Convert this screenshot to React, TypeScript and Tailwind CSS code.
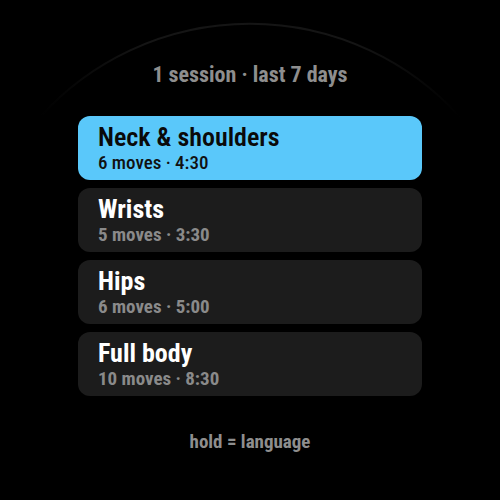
import React from "react";

const items = [
  { title: "Neck & shoulders", sub: "6 moves · 4:30", active: true },
  { title: "Wrists", sub: "5 moves · 3:30" },
  { title: "Hips", sub: "6 moves · 5:00" },
  { title: "Full body", sub: "10 moves · 8:30" },
];

export default function App() {
  return (
    <div
      className="relative w-[500px] h-[500px] bg-black overflow-hidden flex flex-col items-center"
      style={{ fontFamily: "Roboto, 'Liberation Sans', sans-serif" }}
    >
      <svg className="absolute left-0 top-0" width="500" height="500" viewBox="0 0 500 500">
        <defs>
          <linearGradient id="fade" x1="0" y1="0" x2="1" y2="0">
            <stop offset="0" stopColor="#151515" stopOpacity="0" />
            <stop offset="0.25" stopColor="#151515" stopOpacity="1" />
            <stop offset="0.75" stopColor="#151515" stopOpacity="1" />
            <stop offset="1" stopColor="#151515" stopOpacity="0" />
          </linearGradient>
        </defs>
        <path d="M 40 117 A 283 283 0 0 1 460 117" fill="none" stroke="url(#fade)" strokeWidth="2" />
      </svg>
      <div className="relative mt-[62px] text-[22px] leading-[26px] font-bold text-[#8e8e8e] font-stretch-condensed">
        1 session · last 7 days
      </div>
      <div className="relative mt-[28px] w-[344px] flex flex-col gap-2">
        {items.map((it) => (
          <div
            key={it.title}
            className={`h-16 rounded-[12px] pl-5 flex flex-col justify-center ${
              it.active ? "bg-[#5ac8fa]" : "bg-[#1c1c1c]"
            }`}
          >
            <div
              className={`text-[26px] leading-[29px] font-stretch-condensed ${
                it.active ? "text-[#0a0a0a] font-semibold" : "text-white font-bold"
              }`}
            >
              {it.title}
            </div>
            <div
              className={`text-[19px] leading-[21px] mb-[1px] font-stretch-condensed ${
                it.active ? "text-[#111111] font-medium" : "text-[#8a8a8a] font-bold"
              }`}
            >
              {it.sub}
            </div>
          </div>
        ))}
      </div>
      <div className="relative mt-[35px] text-[19px] leading-[22px] font-bold text-[#8e8e8e] font-stretch-condensed">
        hold = language
      </div>
    </div>
  );
}
